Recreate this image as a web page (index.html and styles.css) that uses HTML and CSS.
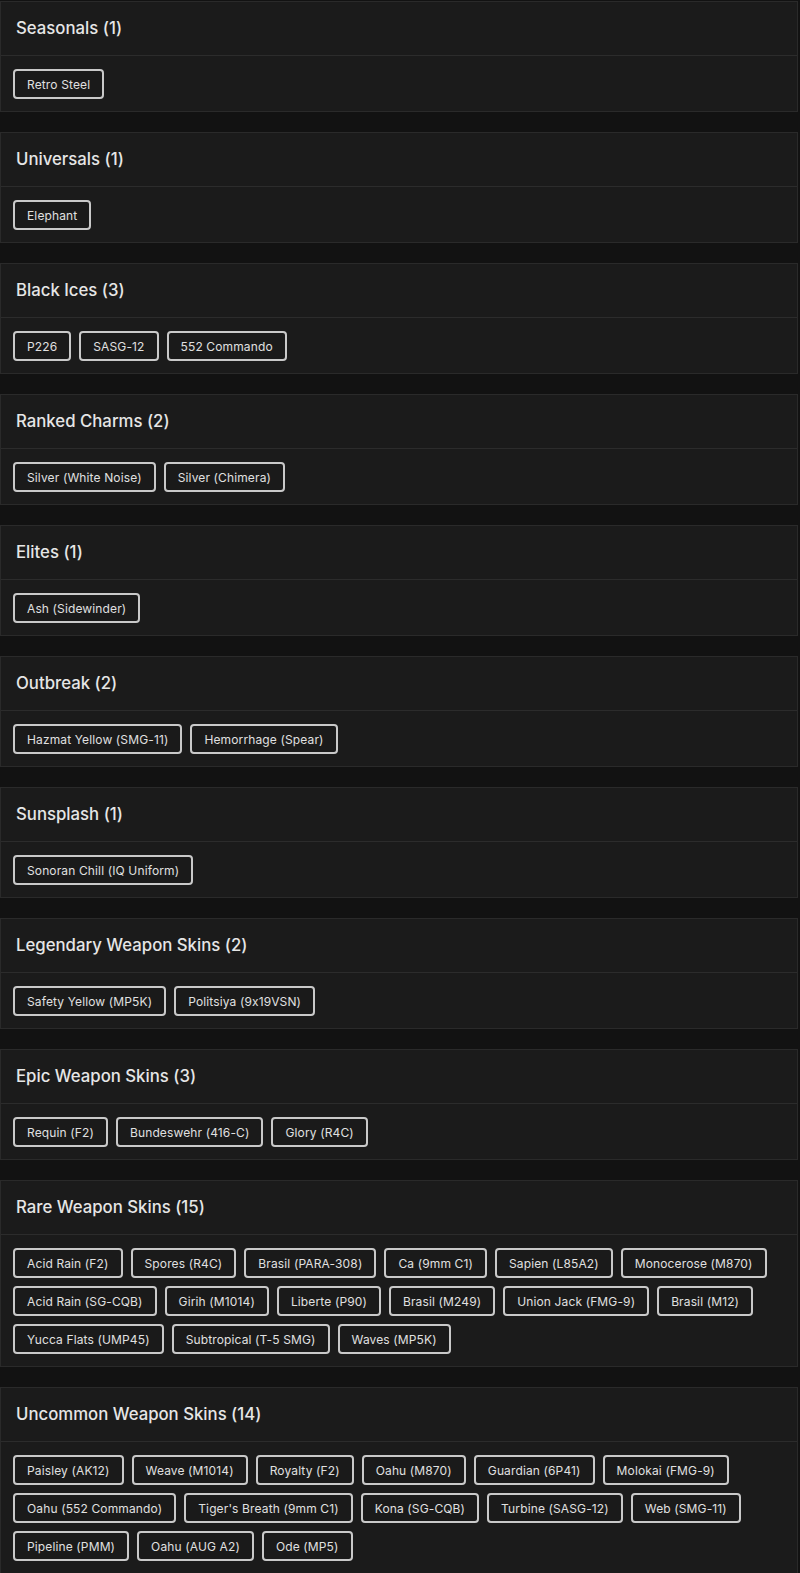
FILE: index.html
```html
<!DOCTYPE html>
<html lang="en">
<head>
<meta charset="utf-8">
<title>Items</title>
<link rel="stylesheet" href="styles.css">
</head>
<body>
<main class="list">
  <section class="card">
    <h2 class="card-title">Seasonals (1)</h2>
    <div class="card-body">
      <span class="tag">Retro Steel</span>
    </div>
  </section>
  <section class="card">
    <h2 class="card-title">Universals (1)</h2>
    <div class="card-body">
      <span class="tag">Elephant</span>
    </div>
  </section>
  <section class="card">
    <h2 class="card-title">Black Ices (3)</h2>
    <div class="card-body">
      <span class="tag">P226</span>
      <span class="tag">SASG-12</span>
      <span class="tag">552 Commando</span>
    </div>
  </section>
  <section class="card">
    <h2 class="card-title">Ranked Charms (2)</h2>
    <div class="card-body">
      <span class="tag">Silver (White Noise)</span>
      <span class="tag">Silver (Chimera)</span>
    </div>
  </section>
  <section class="card">
    <h2 class="card-title">Elites (1)</h2>
    <div class="card-body">
      <span class="tag">Ash (Sidewinder)</span>
    </div>
  </section>
  <section class="card">
    <h2 class="card-title">Outbreak (2)</h2>
    <div class="card-body">
      <span class="tag">Hazmat Yellow (SMG-11)</span>
      <span class="tag">Hemorrhage (Spear)</span>
    </div>
  </section>
  <section class="card">
    <h2 class="card-title">Sunsplash (1)</h2>
    <div class="card-body">
      <span class="tag">Sonoran Chill (IQ Uniform)</span>
    </div>
  </section>
  <section class="card">
    <h2 class="card-title">Legendary Weapon Skins (2)</h2>
    <div class="card-body">
      <span class="tag">Safety Yellow (MP5K)</span>
      <span class="tag">Politsiya (9x19VSN)</span>
    </div>
  </section>
  <section class="card">
    <h2 class="card-title">Epic Weapon Skins (3)</h2>
    <div class="card-body">
      <span class="tag">Requin (F2)</span>
      <span class="tag">Bundeswehr (416-C)</span>
      <span class="tag">Glory (R4C)</span>
    </div>
  </section>
  <section class="card">
    <h2 class="card-title">Rare Weapon Skins (15)</h2>
    <div class="card-body">
      <span class="tag">Acid Rain (F2)</span>
      <span class="tag">Spores (R4C)</span>
      <span class="tag">Brasil (PARA-308)</span>
      <span class="tag">Ca (9mm C1)</span>
      <span class="tag">Sapien (L85A2)</span>
      <span class="tag">Monocerose (M870)</span>
      <span class="tag">Acid Rain (SG-CQB)</span>
      <span class="tag">Girih (M1014)</span>
      <span class="tag">Liberte (P90)</span>
      <span class="tag">Brasil (M249)</span>
      <span class="tag">Union Jack (FMG-9)</span>
      <span class="tag">Brasil (M12)</span>
      <span class="tag">Yucca Flats (UMP45)</span>
      <span class="tag">Subtropical (T-5 SMG)</span>
      <span class="tag">Waves (MP5K)</span>
    </div>
  </section>
  <section class="card">
    <h2 class="card-title">Uncommon Weapon Skins (14)</h2>
    <div class="card-body">
      <span class="tag">Paisley (AK12)</span>
      <span class="tag">Weave (M1014)</span>
      <span class="tag">Royalty (F2)</span>
      <span class="tag">Oahu (M870)</span>
      <span class="tag">Guardian (6P41)</span>
      <span class="tag">Molokai (FMG-9)</span>
      <span class="tag">Oahu (552 Commando)</span>
      <span class="tag">Tiger's Breath (9mm C1)</span>
      <span class="tag">Kona (SG-CQB)</span>
      <span class="tag">Turbine (SASG-12)</span>
      <span class="tag">Web (SMG-11)</span>
      <span class="tag">Pipeline (PMM)</span>
      <span class="tag">Oahu (AUG A2)</span>
      <span class="tag">Ode (MP5)</span>
    </div>
  </section>
</main>
</body>
</html>
```

FILE: styles.css
```css
html, body {
  margin: 0;
  padding: 0;
  background: #121212;
}

body {
  font-family: Inter, "Noto Sans", sans-serif;
  font-feature-settings: "calt" 0;
  color: #e4e4e4;
  padding-top: 1px;
}

.list {
  display: flex;
  flex-direction: column;
  gap: 20px;
  width: 798px;
}

.card {
  background: #1b1b1b;
  border: 1px solid #2a2a2a;
}

.card-title {
  margin: 0;
  padding: 16px 15px;
  height: 21px;
  line-height: 21px;
  font-size: 16.75px;
  font-weight: 500;
  color: #e6e6e6;
  border-bottom: 1px solid #2c2c2c;
}

.card-body {
  display: flex;
  flex-wrap: wrap;
  gap: 8px;
  padding: 13px 12px 12px;
}

.tag {
  display: inline-flex;
  align-items: center;
  box-sizing: border-box;
  height: 30px;
  padding: 0 12px;
  border: 2px solid #c9c9c9;
  border-radius: 4px;
  background: #1a1a1a;
  font-size: 12px;
  letter-spacing: 0.13px;
  color: #e0e0e0;
  white-space: nowrap;
}
```
